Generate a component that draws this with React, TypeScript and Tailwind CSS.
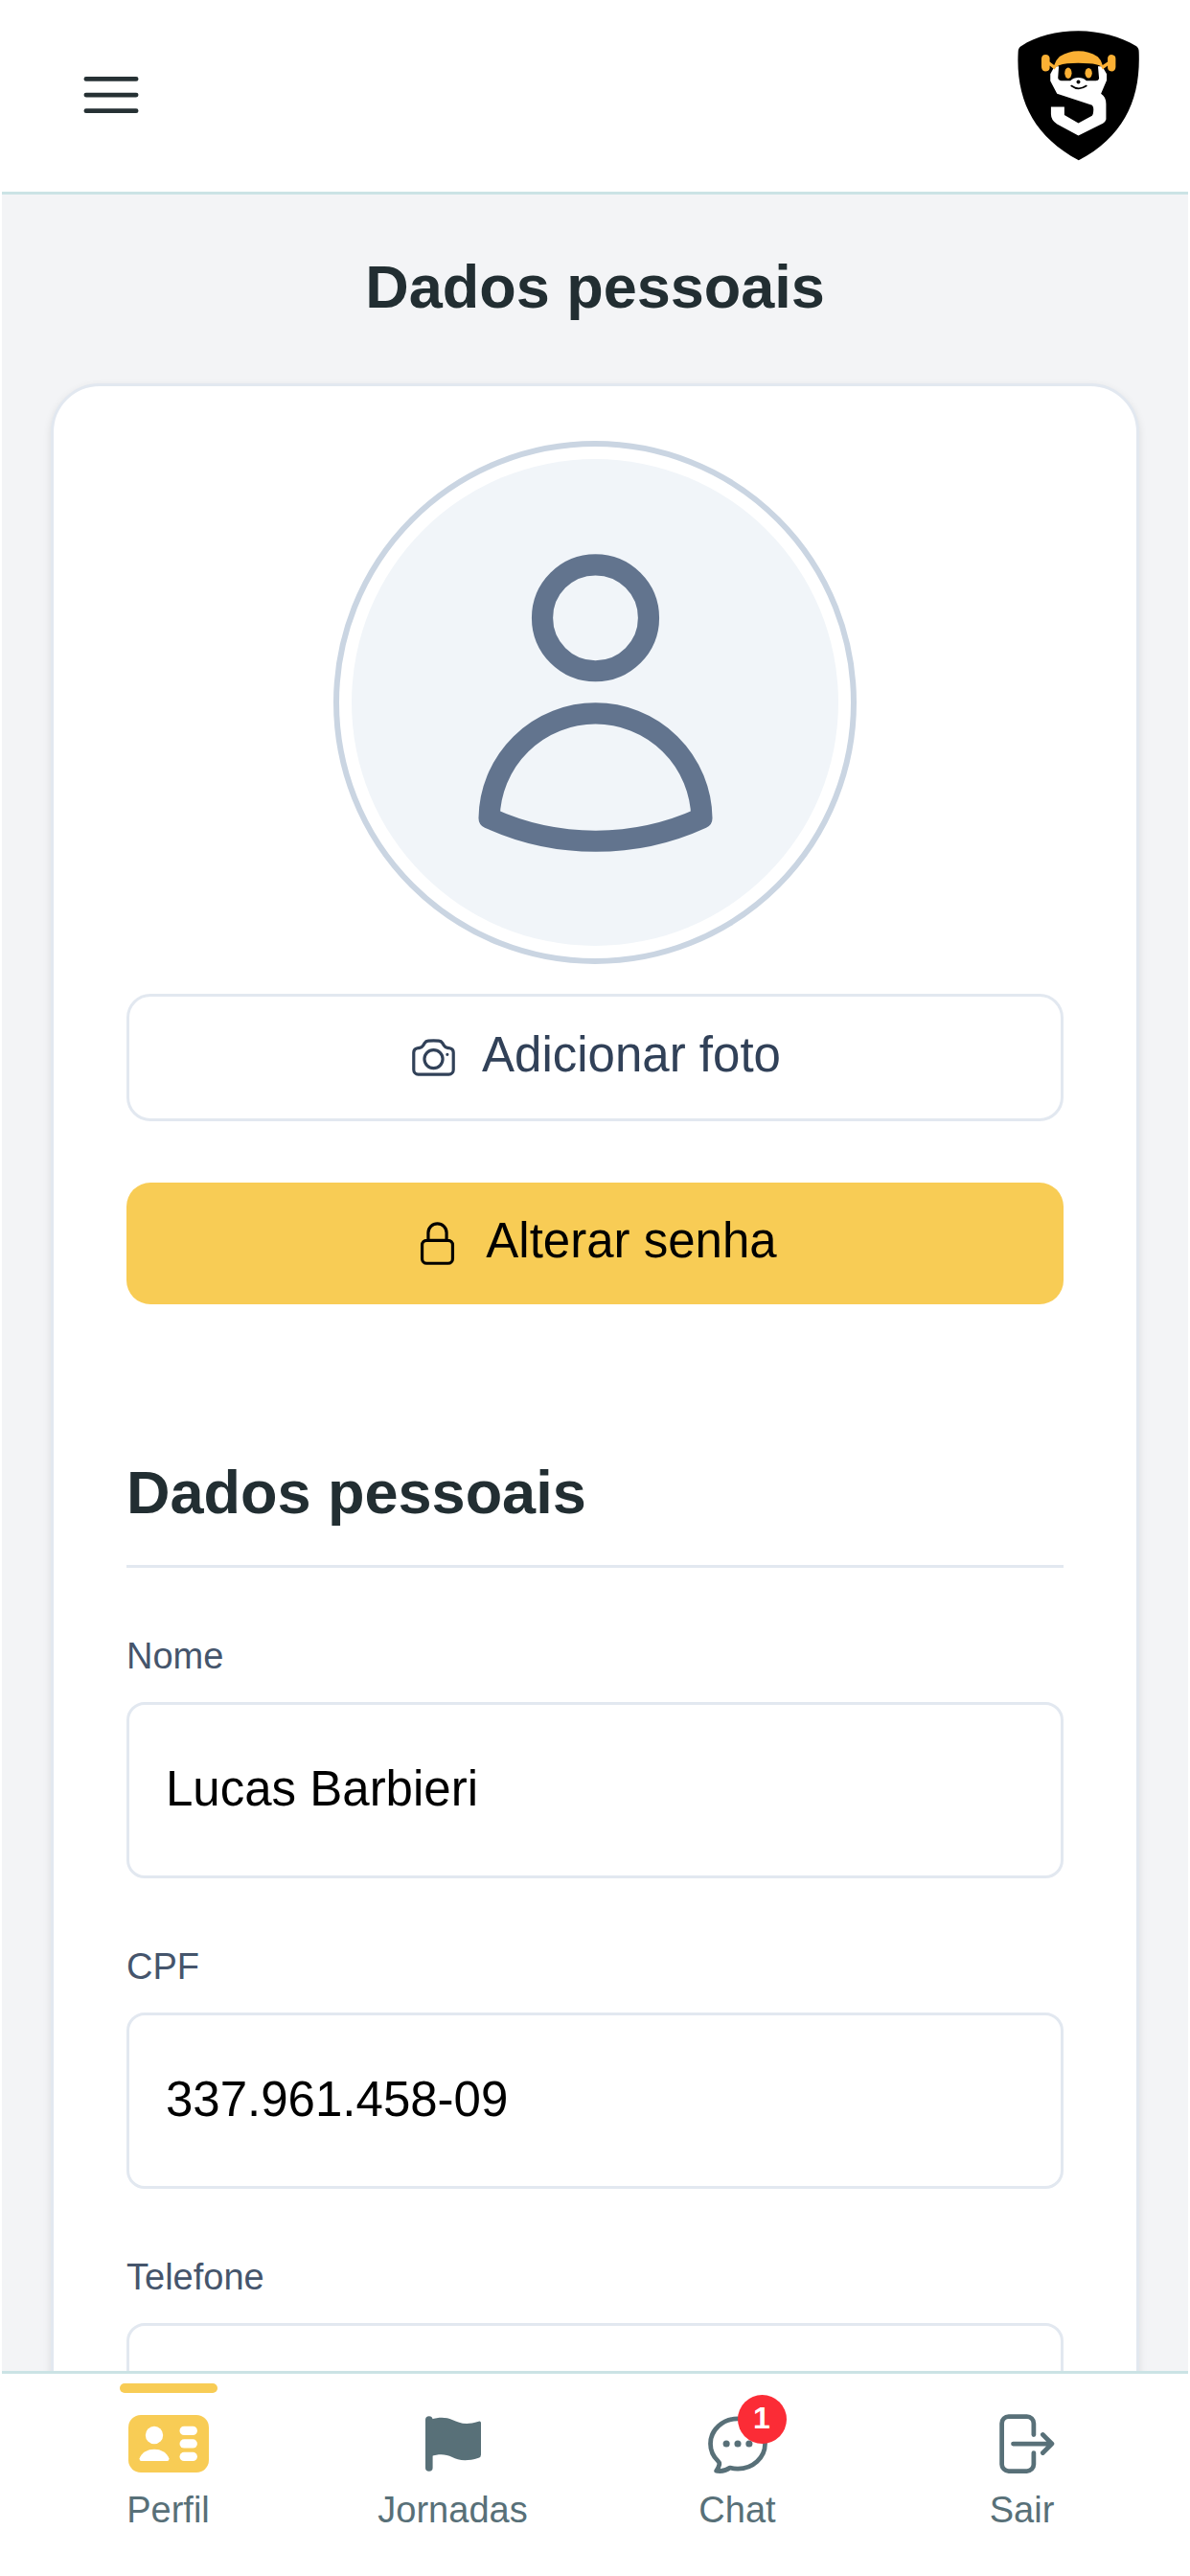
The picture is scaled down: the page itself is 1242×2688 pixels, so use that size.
import { useState } from "react";
import type { ReactNode } from "react";
import {
    HiBars3,
    HiOutlineCamera,
    HiOutlineChatBubbleOvalLeftEllipsis,
    HiOutlineArrowRightOnRectangle,
    HiOutlineLockClosed,
    HiOutlineUser,
} from "react-icons/hi2";

function Logo() {
    return (
        <svg viewBox="66 62 382 410" className="h-[137px] w-[127px]" aria-label="Logo" role="img">
            <path d="M257 65C325 65 390 84 438 112Q447 118 447 130C453 280 400 395 258 471C116 395 60 280 68 130Q68 118 78 112C124 82 189 65 257 65Z" fill="#000" />
            <path d="M182 176L332 176L346 200L346 220L328 262Q344 272 344 294L344 342Q342 350 334 355L257 393L190 357Q171 346 171 326L171 303L213 303L213 329L257 354L300 331Q304 325 304 318Q306 304 300 298L190 262L169 222L169 200Z" fill="#fff" />
            <path d="M196 170Q256 162 318 170L322 214Q320 221 312 221L282 221Q272 211 257 211Q242 211 232 221L204 221Q194 220 193 212Z" fill="#000" />
            <path d="M182 186L167 174L167 182Q165 192 153 192Q141 190 141 176L141 152Q142 139 154 139Q166 140 167 150L167 162L181 172Q186 156 198 145Q226 128 257 128Q290 128 318 146Q329 156 333 172L349 162L349 150Q350 140 361 139Q374 140 374 152L374 178Q373 191 361 192Q349 190 349 180L349 174L333 186L328 176Q316 168 290 167Q256 164 222 167Q190 169 182 186Z" fill="#fbb034" />
            <ellipse cx="225" cy="197" rx="11" ry="17" fill="#fbb034" />
            <ellipse cx="289" cy="197" rx="11" ry="16" fill="#fbb034" />
            <circle cx="257" cy="225" r="6" fill="#000" />
            <path d="M235 237Q258 254 282 237" fill="none" stroke="#000" strokeWidth="5" strokeLinecap="round" />
        </svg>
    );
}

function CardIcon() {
    return (
        <svg viewBox="0 0 84 60" className="h-[60px] w-[84px] shrink-0" aria-hidden="true">
            <rect width="84" height="60" rx="13" fill="#f8cc55" />
            <g fill="#fff">
                <circle cx="27" cy="21" r="9.2" />
                <path d="M11.5 45.5C14 39 20 35.7 27 35.7S40 39 42.5 45.5Q42.5 48 40.5 48H13.5Q11.5 48 11.5 45.5Z" />
                <rect x="53.5" y="11.7" width="18.4" height="9.3" rx="4.6" />
                <rect x="53.5" y="25.3" width="18.4" height="9.3" rx="4.6" />
                <rect x="53.5" y="38.8" width="18.4" height="9.3" rx="4.6" />
            </g>
        </svg>
    );
}

function FlagIcon() {
    return (
        <svg viewBox="0 0 58 58" className="h-[58px] w-[58px]" fill="currentColor" aria-hidden="true">
            <rect x="0" y="0.3" width="7.6" height="57.4" rx="3.8" />
            <path d="M6 3.5C15 1 22 1.5 28 4C36 7.5 42 10 55.5 5.8Q58 5 58 7.5V40.5Q58 43 55.5 43.7C42 48 34 46 28 43C21 39.5 14 39.5 6 42Z" />
        </svg>
    );
}

type NavItemProps = {
    icon: ReactNode;
    label: string;
    active?: boolean;
    badge?: number;
};

function NavItem({ icon, label, active, badge }: NavItemProps) {
    return (
        <a
            href={`#${label.toLowerCase()}`}
            aria-current={active ? "page" : undefined}
            className="relative flex flex-col items-center gap-[3px] pt-[35px] pb-10 text-[38px] leading-[57px] text-[#587078]"
        >
            {active && <span className="absolute top-[10px] h-[10px] w-[102px] rounded-full bg-[#f8cc55]" />}
            <span className="relative flex size-[76px] items-center justify-center">
                {icon}
                {badge && (
                    <span className="absolute -top-[13px] -right-[13px] flex size-[51px] items-center justify-center rounded-full bg-red-500 pb-1 text-[32px] leading-none font-bold text-white">
                        {badge}
                    </span>
                )}
            </span>
            <span>{label}</span>
        </a>
    );
}

type FieldProps = {
    id: string;
    label: string;
    value: string;
    onChange: (value: string) => void;
};

function Field({ id, label, value, onChange }: FieldProps) {
    return (
        <div className="flex flex-col gap-[19px]">
            <label htmlFor={id} className="text-[38px] leading-[57px] text-slate-600">
                {label}
            </label>
            <input
                id={id}
                value={value}
                onChange={(e) => onChange(e.target.value)}
                className="h-[184px] w-full rounded-[19px] border-[3px] border-slate-200 bg-white px-[38px] pb-1 text-[51px] text-black"
            />
        </div>
    );
}

export default function App() {
    const [form, setForm] = useState({ nome: "Lucas Barbieri", cpf: "337.961.458-09", telefone: "" });

    return (
        <div className="flex h-screen flex-col bg-white px-[2px] font-['Liberation_Sans',Arial,sans-serif]">
            <header className="flex h-[203px] shrink-0 items-center justify-between border-b-[3px] border-[#cbe3e5] pr-[51px] pb-[2px] pl-[76px]">
                <button type="button" aria-label="Abrir menu" className="text-[#263134]">
                    <HiBars3 className="size-[76px]" />
                </button>
                <Logo />
            </header>

            <main className="min-h-0 flex-1 overflow-y-auto bg-gray-100 px-[51px] pt-[51px] pb-[51px] [scrollbar-width:none]">
                <h1 className="text-center text-[63px] leading-[90px] font-bold text-[#222e32]">Dados pessoais</h1>

                <div className="mt-14 rounded-[51px] border-[3px] border-slate-200 bg-white px-[76px] pt-[57px] pb-[76px] shadow-[0_3px_9px_rgba(0,0,0,0.1)]">
                    <div className="flex flex-col items-center">
                        <div className="size-[546px] rounded-full border-[6px] border-slate-300 p-[13px]">
                            <div className="flex size-full items-center justify-center rounded-full bg-slate-100">
                                <HiOutlineUser className="size-[355px] text-slate-500" />
                            </div>
                        </div>
                        <button
                            type="button"
                            className="mt-[31px] flex h-[133px] w-full items-center justify-center gap-[25px] rounded-[25px] border-[3px] border-slate-200 bg-white text-[51px] text-slate-700"
                        >
                            <HiOutlineCamera className="size-[51px]" />
                            <span className="pb-1">Adicionar foto</span>
                        </button>
                        <button
                            type="button"
                            className="mt-16 flex h-[127px] w-full items-center justify-center gap-[25px] rounded-[25px] bg-[#f8cc55] text-[51px] text-black"
                        >
                            <HiOutlineLockClosed className="size-[51px]" />
                            <span className="pb-1">Alterar senha</span>
                        </button>
                    </div>

                    <section className="mt-[151px]">
                        <h2 className="border-b-[3px] border-slate-200 pb-[31px] text-[63px] leading-[90px] font-bold text-[#222e32]">
                            Dados pessoais
                        </h2>
                        <form className="mt-16 flex flex-col gap-16">
                            <Field id="nome" label="Nome" value={form.nome} onChange={(nome) => setForm({ ...form, nome })} />
                            <Field id="cpf" label="CPF" value={form.cpf} onChange={(cpf) => setForm({ ...form, cpf })} />
                            <Field id="telefone" label="Telefone" value={form.telefone} onChange={(telefone) => setForm({ ...form, telefone })} />
                        </form>
                    </section>
                </div>
            </main>

            <nav className="grid shrink-0 grid-cols-4 border-t-[3px] border-[#cbe3e5] bg-white px-[25px]">
                <NavItem icon={<CardIcon />} label="Perfil" active />
                <NavItem icon={<FlagIcon />} label="Jornadas" />
                <NavItem icon={<HiOutlineChatBubbleOvalLeftEllipsis className="size-[76px]" />} label="Chat" badge={1} />
                <NavItem icon={<HiOutlineArrowRightOnRectangle className="size-[76px]" />} label="Sair" />
            </nav>
        </div>
    );
}
